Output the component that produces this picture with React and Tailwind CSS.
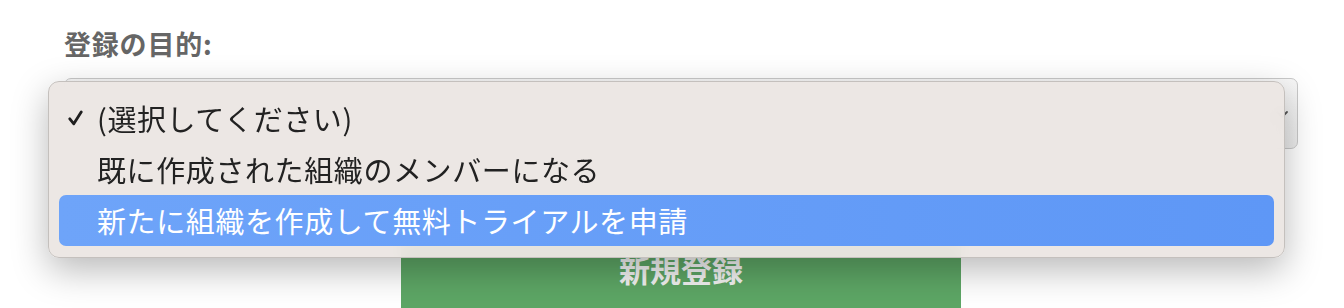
import React from 'react';

const options = [
  { id: 'none', label: '(選択してください)', checked: true },
  { id: 'join', label: '既に作成された組織のメンバーになる' },
  { id: 'trial', label: '新たに組織を作成して無料トライアルを申請', active: true },
];

function App() {
  return (
    <div
      className="min-h-screen bg-white pl-16 pr-[46px] pt-[26px]"
      style={{ fontFamily: '"Noto Sans CJK JP", "Noto Sans", sans-serif' }}
    >
      <label className="block text-[27px] font-bold leading-[36px] tracking-[0.8px] text-[#666666]">登録の目的:</label>

      <div className="relative mt-[16px] h-[71px] rounded-[7px] border border-[#c9c9c9] bg-gradient-to-b from-[#f7f7f7] to-[#ececec]">
        {/* chevron of the closed select */}
        <svg className="absolute right-[8px] top-[28px] h-[14px] w-[14px]" viewBox="0 0 14 14" fill="none">
          <path d="M2 5l5 5 5-5" stroke="#555" strokeWidth="1.8" strokeLinecap="round" strokeLinejoin="round" />
        </svg>

        {/* open native-style menu */}
        <div className="absolute left-[-17px] top-[2px] z-10 w-[1237px] rounded-[11px] border border-[#c4c0bd] bg-[#ebe6e3]/95 px-[10px] py-[11px] shadow-[0_12px_36px_rgba(0,0,0,0.28)] backdrop-blur">
          {options.map((opt) => (
            <div
              key={opt.id}
              className={
                opt.active
                  ? 'relative flex h-[51px] items-center rounded-[7px] bg-gradient-to-r from-[#6ea4f9] to-[#5e97f6] pl-[38px] text-[29px] tracking-[0.6px] text-white'
                  : 'relative flex h-[51px] items-center rounded-[7px] pl-[38px] text-[29px] tracking-[0.6px] text-[#222222]'
              }
            >
              {opt.checked && (
                <svg className="absolute left-[9px] top-[17px] h-[16px] w-[15px]" viewBox="0 0 15 16" fill="none">
                  <path d="M1.8 8.8l4 5L13.2 2" stroke="#1f1f1f" strokeWidth="2.8" strokeLinecap="round" strokeLinejoin="round" />
                </svg>
              )}
              <span className="leading-none">{opt.label}</span>
            </div>
          ))}
        </div>
      </div>

      <button className="ml-[337px] mt-[91px] flex h-[80px] w-[560px] items-start justify-center bg-[#5da665] pt-[9px] text-[31px] font-bold leading-[40px] text-[#f2f2f2]">
        新規登録
      </button>
    </div>
  );
}

export default App;
